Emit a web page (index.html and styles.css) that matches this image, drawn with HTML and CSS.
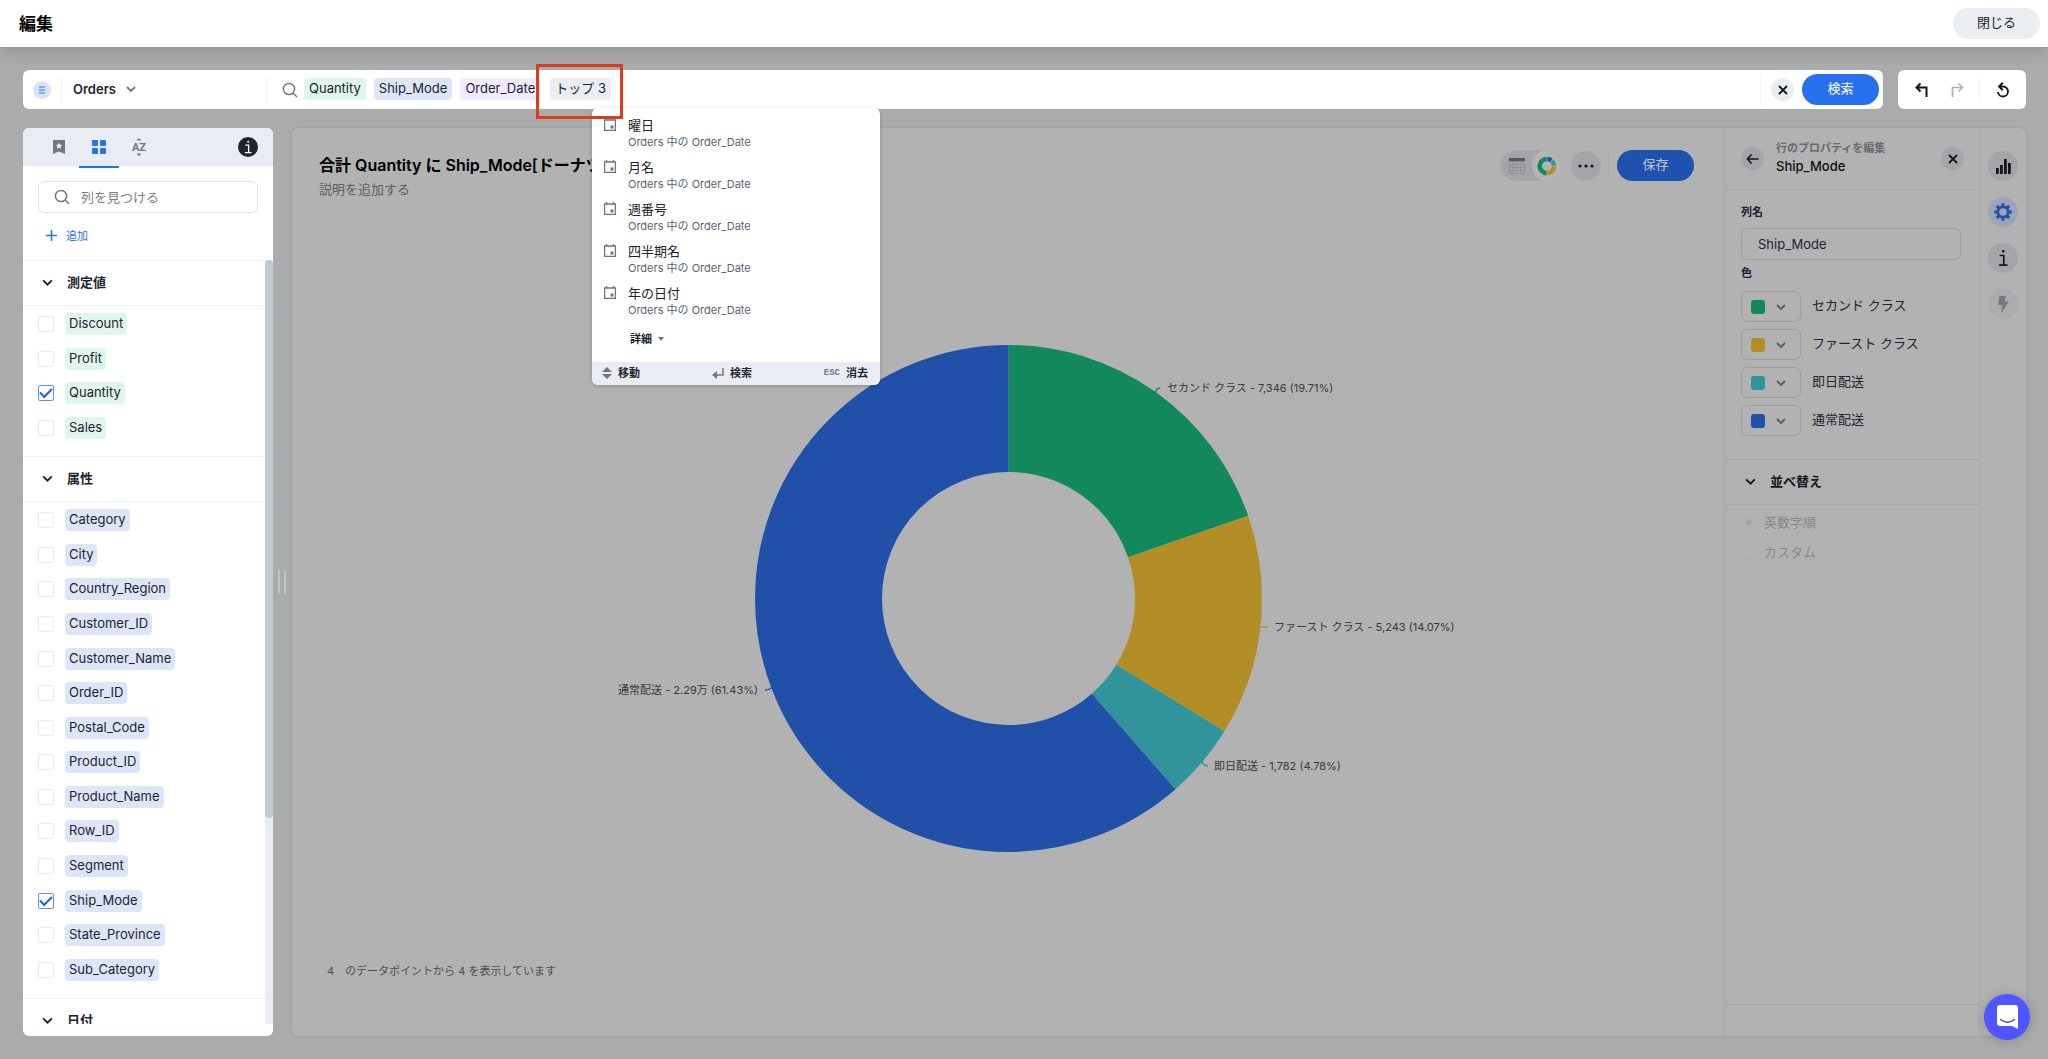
FILE: index.html
```html
<!DOCTYPE html>
<html lang="ja">
<head>
<meta charset="utf-8">
<title>編集</title>
<link rel="stylesheet" href="styles.css">
</head>
<body>
<svg class="defs" aria-hidden="true">
  <symbol id="chevron" viewBox="0 0 12 12"><path d="M2 4l4 4 4-4" fill="none" stroke="currentColor" stroke-width="1.8"/></symbol>
  <symbol id="search" viewBox="0 0 16 16"><circle cx="7" cy="7" r="5.6" fill="none" stroke="currentColor" stroke-width="1.5"/><path d="M11 11l4 4" stroke="currentColor" stroke-width="1.5"/></symbol>
  <symbol id="close" viewBox="0 0 12 12"><path d="M2 2l8 8M10 2l-8 8" stroke="currentColor" stroke-width="1.8"/></symbol>
  <symbol id="calendar" viewBox="0 0 14 14"><path d="M1.6 2h10.8v10.4H1.600zM3.500 0v2M10.500 0v2" fill="none" stroke="currentColor" stroke-width="1.300"/><path d="M7.500 7.500h3v3h-3z" fill="currentColor"/></symbol>
  <symbol id="info" viewBox="0 0 12 18"><path d="M2.500 6.500h4.300v9.500M2 16.200h8.500" fill="none" stroke="currentColor" stroke-width="1.700"/><circle cx="6.300" cy="2.200" r="1.300" fill="currentColor"/></symbol>
</svg>

<header class="topbar">
  <h1 class="topbar-title">編集</h1>
  <button class="pill pill-muted" type="button">閉じる</button>
</header>

<main class="workspace">
  <div class="search-row">
    <form class="search-bar">
      <button class="source-icon" type="button" aria-label="ソース"><svg width="10" height="10" viewBox="0 0 10 10"><path d="M2 2h6M2 5h6M2 8h6" stroke="currentColor" stroke-width="1.200"/></svg></button>
      <button class="source" type="button"><span>Orders</span><svg class="source-chevron" width="12" height="12"><use href="#chevron"/></svg></button>
      <svg class="search-icon" width="16" height="16"><use href="#search"/></svg>
      <div class="tokens">
        <span class="chip chip-green">Quantity</span>
        <span class="chip chip-blue">Ship_Mode</span>
        <span class="chip chip-violet">Order_Date</span>
        <span class="chip chip-gray marked">トップ 3<span class="marker"></span></span>
      </div>
      <input class="query" type="text" aria-label="検索">
      <div class="bar-actions">
        <button class="round round-small" type="button" aria-label="クリア"><svg width="12" height="12"><use href="#close"/></svg></button>
        <button class="pill pill-primary" type="submit">検索</button>
      </div>
      <div class="suggest">
        <ul class="suggest-list">
          <li class="suggest-item"><svg width="14" height="14"><use href="#calendar"/></svg><div><b>曜日</b><span>Orders 中の Order_Date</span></div></li>
          <li class="suggest-item"><svg width="14" height="14"><use href="#calendar"/></svg><div><b>月名</b><span>Orders 中の Order_Date</span></div></li>
          <li class="suggest-item"><svg width="14" height="14"><use href="#calendar"/></svg><div><b>週番号</b><span>Orders 中の Order_Date</span></div></li>
          <li class="suggest-item"><svg width="14" height="14"><use href="#calendar"/></svg><div><b>四半期名</b><span>Orders 中の Order_Date</span></div></li>
          <li class="suggest-item"><svg width="14" height="14"><use href="#calendar"/></svg><div><b>年の日付</b><span>Orders 中の Order_Date</span></div></li>
        </ul>
        <button class="suggest-more" type="button">詳細<svg width="6" height="4" viewBox="0 0 6 4"><path d="M0 0h6L3 4z" fill="#6f7680"/></svg></button>
        <div class="suggest-footer">
          <span><svg width="10" height="12" viewBox="0 0 10 12"><path d="M5 0l5 5H0zM0 7h10l-5 5z" fill="currentColor"/></svg>移動</span>
          <span><svg width="12" height="12" viewBox="0 0 12 12"><path d="M11 1v7H2.500" fill="none" stroke="currentColor" stroke-width="1.500"/><path d="M5 4v8L0 8z" fill="currentColor"/></svg>検索</span>
          <span><kbd>ESC</kbd>消去</span>
        </div>
      </div>
    </form>
    <div class="history">
      <button class="plain" type="button" aria-label="元に戻す"><svg width="16" height="16" viewBox="0 0 16 16"><path d="M6.500 1.500L2.500 5.500l4 4M2.500 5.500h10V15" fill="none" stroke="#14161c" stroke-width="2"/></svg></button>
      <button class="plain" type="button" aria-label="やり直し" disabled><svg width="16" height="16" viewBox="0 0 16 16"><path d="M9.500 1.500l4 4-4 4M13.500 5.500h-10V15" fill="none" stroke="#b0b2b5" stroke-width="1.700"/></svg></button>
      <button class="plain history-reset" type="button" aria-label="リセット"><svg width="16" height="16" viewBox="0 0 16 16"><path d="M4 4.500h4a5 5 0 1 1-5 5.500" fill="none" stroke="#14161c" stroke-width="1.900"/><path d="M7.800 .8L4 4.500l3.800 3.700" fill="none" stroke="#14161c" stroke-width="1.900"/></svg></button>
    </div>
  </div>

  <div class="panels">
    <aside class="sidebar">
      <div class="tabs">
        <button class="tab" type="button" aria-label="ブックマーク"><svg width="12" height="14" viewBox="0 0 12 14"><path d="M0 0h12v14l-6-2.500L0 14z" fill="#6f7680"/><path d="M6 2.500l1 2.300 2.500.2-1.900 1.600.6 2.400L6 7.700 3.800 9l.6-2.400L2.500 5 5 4.800z" fill="#e9edf3"/></svg></button>
        <button class="tab tab-active" type="button" aria-label="列"><svg width="14" height="14" viewBox="0 0 14 14" fill="#2770ef"><rect width="6" height="6" rx="1"/><rect x="8" width="6" height="6" rx="1"/><rect y="8" width="6" height="6" rx="1"/><rect x="8" y="8" width="6" height="6" rx="1"/></svg></button>
        <button class="tab" type="button" aria-label="並べ替え"><svg width="16" height="18" viewBox="0 0 16 18"><path d="M5.500 2.500L8 0l2.500 2.500zM5.500 15.500L8 18l2.500-2.500z" fill="#6f7680"/><text class="az" x="8" y="13" text-anchor="middle">AZ</text></svg></button>
        <button class="info-badge" type="button" aria-label="情報"><svg width="10" height="14" viewBox="0 0 12 18"><use href="#info"/></svg></button>
      </div>
      <label class="find"><svg width="16" height="16"><use href="#search"/></svg><input type="text" placeholder="列を見つける" aria-label="列を見つける"></label>
      <button class="add" type="button"><svg width="11" height="11" viewBox="0 0 11 11"><path d="M5.500 0v11M0 5.500h11" stroke="currentColor" stroke-width="1.500"/></svg>追加</button>
      <div class="columns">
        <div class="columns-scroll">
          <section>
            <button class="group" type="button"><svg width="13" height="13"><use href="#chevron"/></svg>測定値</button>
            <div class="list list-measures">
              <label><input type="checkbox"><span class="chip chip-green">Discount</span></label>
              <label><input type="checkbox"><span class="chip chip-green">Profit</span></label>
              <label><input type="checkbox" checked><span class="chip chip-green">Quantity</span></label>
              <label><input type="checkbox"><span class="chip chip-green">Sales</span></label>
            </div>
          </section>
          <section>
            <button class="group" type="button"><svg width="13" height="13"><use href="#chevron"/></svg>属性</button>
            <div class="list list-attributes">
              <label><input type="checkbox"><span class="chip chip-blue">Category</span></label>
              <label><input type="checkbox"><span class="chip chip-blue">City</span></label>
              <label><input type="checkbox"><span class="chip chip-blue">Country_Region</span></label>
              <label><input type="checkbox"><span class="chip chip-blue">Customer_ID</span></label>
              <label><input type="checkbox"><span class="chip chip-blue">Customer_Name</span></label>
              <label><input type="checkbox"><span class="chip chip-blue">Order_ID</span></label>
              <label><input type="checkbox"><span class="chip chip-blue">Postal_Code</span></label>
              <label><input type="checkbox"><span class="chip chip-blue">Product_ID</span></label>
              <label><input type="checkbox"><span class="chip chip-blue">Product_Name</span></label>
              <label><input type="checkbox"><span class="chip chip-blue">Row_ID</span></label>
              <label><input type="checkbox"><span class="chip chip-blue">Segment</span></label>
              <label><input type="checkbox" checked><span class="chip chip-blue">Ship_Mode</span></label>
              <label><input type="checkbox"><span class="chip chip-blue">State_Province</span></label>
              <label><input type="checkbox"><span class="chip chip-blue">Sub_Category</span></label>
            </div>
          </section>
          <section>
            <button class="group" type="button"><svg width="13" height="13"><use href="#chevron"/></svg>日付</button>
          </section>
        </div>
        <div class="track"><div class="thumb"></div></div>
      </div>
    </aside>

    <div class="resizer"><i></i><i></i></div>

    <div class="answer">
      <section class="chart-pane">
        <div class="chart-head">
          <div class="chart-titles">
            <h2>合計 Quantity に Ship_Mode[ドーナツ]</h2>
            <p>説明を追加する</p>
          </div>
          <div class="chart-tools">
            <div class="switch">
              <button type="button" aria-label="表"><svg width="16" height="16" viewBox="0 0 16 16"><path d="M.5 3.500h15v12H.5zM4.200 3.500v12M8 3.500v12M11.800 3.500v12M.5 6.500h15M.5 9.500h15M.5 12.500h15" fill="none" stroke="#8f9298"/><path d="M0 0h16v3H0z" fill="#55585e"/></svg></button>
              <button class="switch-on" type="button" aria-label="グラフ"><svg width="20" height="20" viewBox="0 0 20 20" fill="none" stroke-width="4.500"><path d="M9.700 17A7 7 0 0 1 9.700 3" stroke="#13885a"/><path d="M10.400 3A7 7 0 0 1 14.300 4.500" stroke="#2050a8"/><path d="M14.900 5A7 7 0 0 1 17 9.700" stroke="#31939b"/><path d="M17 10.400A7 7 0 0 1 10.400 17" stroke="#b38e27"/></svg></button>
            </div>
            <button class="round round-large" type="button" aria-label="その他"><svg width="16" height="4" viewBox="0 0 16 4" fill="#14161c"><circle cx="2" cy="2" r="1.600"/><circle cx="8" cy="2" r="1.600"/><circle cx="14" cy="2" r="1.600"/></svg></button>
            <div class="save"><button class="pill pill-save" type="button">保存</button></div>
          </div>
        </div>
        <svg class="donut" viewBox="0 0 1429 703" role="img" aria-label="ドーナツグラフ">
          <g fill="none" stroke-width="127">
            <circle cx="715.500" cy="351.500" r="190" stroke="#13885a" pathLength="100" stroke-dasharray="19.710 80.290" transform="rotate(-90 715.500 351.500)"/>
            <circle cx="715.500" cy="351.500" r="190" stroke="#b38e27" pathLength="100" stroke-dasharray="14.070 85.930" stroke-dashoffset="-19.710" transform="rotate(-90 715.500 351.500)"/>
            <circle cx="715.500" cy="351.500" r="190" stroke="#31939b" pathLength="100" stroke-dasharray="4.780 95.220" stroke-dashoffset="-33.780" transform="rotate(-90 715.500 351.500)"/>
            <circle cx="715.500" cy="351.500" r="190" stroke="#2050a8" pathLength="100" stroke-dasharray="61.440 38.560" stroke-dashoffset="-38.560" transform="rotate(-90 715.500 351.500)"/>
          </g>
          <g fill="none" stroke-width="1.500">
            <path d="M862 147q1-6 5-6" stroke="#13885a"/>
            <path d="M966 380h9" stroke="#b38e27"/>
            <path d="M908 513q2 6 7 6" stroke="#31939b"/>
            <path d="M472 443q4 0 8-3" stroke="#2050a8"/>
          </g>
          <g class="donut-labels">
            <text x="874" y="145">セカンド クラス - 7,346 (19.71%)</text>
            <text x="981" y="384">ファースト クラス - 5,243 (14.07%)</text>
            <text x="921" y="523">即日配送 - 1,782 (4.78%)</text>
            <text x="465" y="447" text-anchor="end">通常配送 - 2.29万 (61.43%)</text>
          </g>
        </svg>
        <p class="points"><span>4</span><span>のデータポイントから 4 を表示しています</span></p>
      </section>

      <section class="props">
        <header class="props-head">
          <button class="round round-small" type="button" aria-label="戻る"><svg width="13" height="12" viewBox="0 0 13 12"><path d="M5.500 1.500L1.500 6l4 4.500M1.500 6h11" fill="none" stroke="currentColor" stroke-width="1.700"/></svg></button>
          <div class="props-title"><small>行のプロパティを編集</small><h3>Ship_Mode</h3></div>
          <button class="round round-small" type="button" aria-label="閉じる"><svg width="12" height="12"><use href="#close"/></svg></button>
        </header>
        <div class="props-body">
          <label class="field-name" for="column-name">列名</label>
          <input class="field" id="column-name" type="text" value="Ship_Mode">
          <p class="field-name">色</p>
          <div class="colors">
            <div class="color"><button type="button" aria-label="セカンド クラスの色"><i class="swatch swatch-green"></i><svg width="12" height="12"><use href="#chevron"/></svg></button><span>セカンド クラス</span></div>
            <div class="color"><button type="button" aria-label="ファースト クラスの色"><i class="swatch swatch-yellow"></i><svg width="12" height="12"><use href="#chevron"/></svg></button><span>ファースト クラス</span></div>
            <div class="color"><button type="button" aria-label="即日配送の色"><i class="swatch swatch-teal"></i><svg width="12" height="12"><use href="#chevron"/></svg></button><span>即日配送</span></div>
            <div class="color"><button type="button" aria-label="通常配送の色"><i class="swatch swatch-blue"></i><svg width="12" height="12"><use href="#chevron"/></svg></button><span>通常配送</span></div>
          </div>
        </div>
        <button class="props-group" type="button"><svg width="13" height="13"><use href="#chevron"/></svg>並べ替え</button>
        <div class="sorts">
          <label><input type="radio" name="sort" checked disabled>英数字順</label>
          <label><input type="radio" name="sort" disabled>カスタム</label>
        </div>
        <footer class="props-foot"></footer>
      </section>

      <nav class="rail">
        <button class="round round-large" type="button" aria-label="グラフの種類"><svg width="15" height="15" viewBox="0 0 15 15" fill="#14161c"><path d="M0 9h2.800v6H0zM4 6h2.800v9H4zM8 0h2.800v15H8zM12 4h2.800v11H12z"/></svg></button>
        <button class="round round-large rail-on" type="button" aria-label="設定"><svg width="18" height="18" viewBox="0 0 18 18"><circle cx="9" cy="9" r="5.300" fill="none" stroke="#2050a8" stroke-width="3"/><circle cx="9" cy="9" r="7.600" fill="none" stroke="#2050a8" stroke-width="2.400" pathLength="16" stroke-dasharray="1 1" stroke-dashoffset=".5"/></svg></button>
        <button class="round round-large" type="button" aria-label="情報"><svg width="12" height="18"><use href="#info"/></svg></button>
        <button class="round round-large rail-off" type="button" aria-label="操作" disabled><svg width="12" height="17" viewBox="0 0 12 17"><path d="M2.500 0H9L7.500 5.500H12L4.200 17l.8-8H1z" fill="#77787c"/></svg></button>
      </nav>
    </div>
  </div>
</main>

<button class="chat" type="button" aria-label="チャット"><svg width="21" height="24" viewBox="0 0 21 24"><path d="M3 0h15a3 3 0 0 1 3 3v21l-6-3H3a3 3 0 0 1-3-3V3a3 3 0 0 1 3-3z" fill="#fff"/><path d="M3.500 14.500q7 5.500 14 0" fill="none" stroke="#3d43b8" stroke-width="1.400" stroke-linecap="round"/></svg></button>
</body>
</html>
```

FILE: styles.css
```css
* { box-sizing: border-box; }

body {
  margin: 0;
  height: 100vh;
  display: flex;
  flex-direction: column;
  overflow: hidden;
  background: #a9abad;
  color: #1d232f;
  font: 13px/20px Inter, "Noto Sans CJK JP", sans-serif;
}

button, input { font: inherit; color: inherit; margin: 0; }
button { border: 0; padding: 0; background: none; display: flex; align-items: center; justify-content: center; }
h1, h2, h3, p, ul { margin: 0; padding: 0; }
svg { flex: none; display: block; }
.defs { position: absolute; width: 0; height: 0; }

/* Top bar */
.topbar {
  flex: none;
  height: 47px;
  padding: 0 8px 0 19px;
  display: flex;
  align-items: center;
  justify-content: space-between;
  background: #fff;
  box-shadow: 0 4px 16px rgba(0, 0, 0, .16);
}
.topbar-title { font-size: 17px; line-height: 24px; color: #000; }

.pill { height: 31px; width: 77px; border-radius: 16px; padding-bottom: 4px; }
.pill-muted { width: 87px; background: #eaedf2; }
.pill-primary { background: #2770ef; color: #fff; }
.pill-save { background: #1f52ae; color: #bdc4d2; }

.round { flex: none; border-radius: 50%; background: #a3a5a9; color: #14161c; }
.round-small { width: 23px; height: 23px; }
.round-large { width: 30px; height: 30px; }

/* Search row */
.workspace {
  flex: 1;
  min-height: 0;
  padding: 23px 22px 23px 23px;
  display: flex;
  flex-direction: column;
  gap: 19px;
}
.search-row { display: flex; gap: 15px; height: 39px; flex: none; }
.search-bar {
  flex: 1;
  position: relative;
  display: flex;
  align-items: center;
  padding: 0 4px 0 10px;
  background: #fff;
  border-radius: 6px;
}
.source-icon { width: 18px; height: 18px; border-radius: 50%; background: #d5e3fb; color: #2770ef; }
.source {
  width: 206px;
  height: 26px;
  margin-left: 10px;
  padding: 0 0 2px 11px;
  gap: 9px;
  justify-content: flex-start;
  border: solid #eef0f3;
  border-width: 0 1px;
  font-weight: 600;
}
.source-chevron { color: #6f7680; }
.search-icon { margin: 0 6px 0 15px; color: #6f7680; }
.chip { height: 22px; padding: 0 4px; border-radius: 4px; line-height: 21px; white-space: nowrap; }
.tokens { display: flex; gap: 8px; padding-bottom: 1px; }
.tokens .chip { padding: 0 5px; line-height: 20px; }
.chip-green { background: #dff6ec; }
.chip-blue { background: #dde6f8; }
.chip-violet { background: #f1ebfd; }
.chip-gray { background: #eaedf2; }
.marked { position: relative; margin-left: 2px; }
.marker {
  position: absolute;
  inset: -14px -12px -19px -14px;
  border: 3px solid #de3a1c;
  z-index: 3;
}
.query { flex: 1; min-width: 0; height: 26px; border: 0; outline: 0; background: none; }
.bar-actions {
  height: 31px;
  padding-left: 10px;
  border-left: 1px solid #f5f6f8;
  display: flex;
  align-items: center;
  gap: 8px;
}
.bar-actions .round { background: #eaedf2; }

.history {
  width: 128px;
  padding-left: 6px;
  display: flex;
  align-items: center;
  background: #fff;
  border-radius: 6px;
}
.plain { width: 35px; height: 26px; }
.history-reset { flex: 1; margin-left: 5px; border-left: 1px solid #eef0f3; }

/* Suggestions */
.suggest {
  position: absolute;
  left: 569px;
  top: 38px;
  width: 288px;
  z-index: 2;
  background: #fff;
  border-radius: 6px;
  overflow: hidden;
  box-shadow: 0 1px 4px rgba(0, 0, 0, .2);
}
.suggest-list { list-style: none; padding-top: 8px; }
.suggest-item { height: 42px; padding: 0 11px; display: flex; gap: 11px; color: #6f7680; }
.suggest-item svg { margin-top: 2px; }
.suggest-item b, .suggest-item span { display: block; white-space: nowrap; }
.suggest-item b { font-weight: 400; line-height: 18px; color: #1d232f; }
.suggest-item span { font-size: 11px; line-height: 17px; color: #5b6370; }
.suggest-more { height: 36px; padding: 0 0 11px 38px; gap: 6px; font-size: 11px; font-weight: 700; line-height: 24px; }
.suggest-footer {
  height: 23px;
  padding: 0 12px 2px 10px;
  display: flex;
  align-items: center;
  justify-content: space-between;
  background: #e9edf3;
  font-size: 11px;
  font-weight: 700;
}
.suggest-footer span { display: flex; align-items: center; gap: 6px; }
.suggest-footer svg, .suggest-footer kbd { color: #6f7680; }
.suggest-footer kbd { font: 700 9px/20px "Liberation Mono", monospace; }

/* Sidebar */
.panels { flex: 1; min-height: 0; display: flex; }
.sidebar {
  width: 250px;
  flex: none;
  display: flex;
  flex-direction: column;
  padding-bottom: 12px;
  background: #fff;
  border-radius: 6px;
  overflow: hidden;
}
.tabs { height: 38px; flex: none; padding: 0 15px 0 16px; display: flex; align-items: center; background: #e9edf3; }
.tab { width: 40px; height: 40px; align-self: flex-start; border-bottom: 2px solid transparent; }
.tab-active { border-color: #2770ef; }
.az { font: 700 11px Roboto, sans-serif; fill: #6f7680; }
.info-badge { width: 20px; height: 20px; margin-left: auto; border-radius: 50%; background: #1d232f; color: #fff; }
.find {
  flex: none;
  height: 32px;
  margin: 15px 15px 0;
  padding-left: 15px;
  display: flex;
  align-items: center;
  gap: 11px;
  border: 1px solid #dfe2e6;
  border-radius: 6px;
  color: #6f7680;
}
.find input { flex: 1; min-width: 0; border: 0; outline: 0; padding: 0; background: none; }
.find input::placeholder { color: #777e8b; opacity: 1; }
.add { align-self: flex-start; flex: none; height: 47px; padding: 0 23px 2px; gap: 9px; font-size: 11px; color: #2770ef; }
.columns { flex: 1; min-height: 0; display: flex; }
.columns-scroll { flex: 1; overflow: hidden; }
.group {
  width: 100%;
  height: 46px;
  padding: 0 18px 2px;
  gap: 13px;
  justify-content: flex-start;
  border: solid #eff1f4;
  border-width: 1px 0;
  font-weight: 700;
}
.list { display: grid; grid-auto-rows: 1fr; margin: 1px 0 11px; }
.list-measures { height: 138px; }
.list-attributes { height: 484px; }
.list label { display: flex; align-items: center; gap: 11px; padding-left: 15px; }
.list input {
  appearance: none;
  width: 16px;
  height: 16px;
  border: 1px solid #e8eaed;
  border-radius: 2px;
}
.list input:checked { border-color: #5f93e8; display: grid; place-items: center; }
.list input:checked::before {
  content: "";
  width: 10px;
  height: 5px;
  margin-bottom: 3px;
  border: solid #2464c8;
  border-width: 0 0 2px 2px;
  transform: rotate(-45deg);
}
.track { width: 8px; background: #e9edf3; }
.thumb { height: 73%; background: #c2c9d6; border-radius: 4px; }

.resizer { width: 19px; display: flex; align-items: center; justify-content: center; gap: 4px; padding-right: 1px; }
.resizer i { width: 2px; height: 24px; background: #c2c3c5; }

/* Answer */
.answer { flex: 1; min-width: 0; display: flex; background: #b2b2b2; border-radius: 6px; box-shadow: 0 0 3px rgba(0, 0, 0, .14); }
.chart-pane { flex: 1; min-width: 0; display: flex; flex-direction: column; }
.chart-head { height: 119px; flex: none; padding: 22px 29px 0 27px; display: flex; justify-content: space-between; align-items: flex-start; }
.chart-titles h2 { font-size: 16px; line-height: 30px; font-weight: 600; color: #000; white-space: nowrap; }
.chart-titles p { color: #5b5e64; line-height: 19px; }
.chart-tools { display: flex; align-items: center; }
.chart-tools .round { margin: 0 7px 0 10px; }
.save { padding-left: 8px; border-left: 1px solid #a9aaac; }
.switch { width: 60px; height: 31px; padding-left: 8px; display: flex; align-items: center; justify-content: space-between; border-radius: 16px; background: #a3a5a9; }
.switch-on { width: 29px; height: 31px; border-radius: 50%; background: #b4b4b4; }
.donut { flex: 1; min-height: 0; width: 100%; }
.donut-labels { font-size: 11px; fill: #37393e; }
.points { height: 86px; flex: none; padding: 11px 35px; display: flex; gap: 11px; font-size: 11px; color: #4c4f55; }

.props { width: 257px; flex: none; display: flex; flex-direction: column; border: solid #a9aaac; border-width: 0 1px 0 3px; border-left: 3px double #a9aaac; }
.props-head { height: 62px; padding: 0 15px; display: flex; align-items: center; gap: 12px; border-bottom: 1px solid #a6a7a9; }
.props-title { flex: 1; padding-bottom: 4px; }
.props-title small { display: block; font-size: 11px; font-weight: 700; line-height: 18px; color: #666a71; }
.props-title h3 { font-size: 13px; line-height: 18px; font-weight: 500; color: #0c0e12; }
.props-body { padding: 11px 15px 23px; color: #1d232f; }
.field-name { display: block; font-size: 11px; font-weight: 700; line-height: 22px; }
.field { display: block; width: 220px; height: 32px; margin: 5px 0 2px; padding: 0 16px; background: none; border: 1px solid #9c9ea1; border-radius: 6px; }
.colors { display: grid; gap: 7px; margin-top: 7px; }
.color { display: flex; align-items: center; gap: 11px; height: 31px; }
.color span { padding-bottom: 3px; }
.color button { width: 60px; height: 31px; padding-right: 4px; gap: 10px; border: 1px solid #9c9ea1; border-radius: 6px; color: #55585e; }
.swatch { width: 14px; height: 14px; border-radius: 3px; }
.swatch-green { background: #13885a; }
.swatch-yellow { background: #b38e27; }
.swatch-teal { background: #31939b; }
.swatch-blue { background: #2050a8; }
.props-group { height: 46px; padding: 0 18px 2px; gap: 13px; justify-content: flex-start; border: solid #a6a7a9; border-width: 1px 0; font-weight: 700; color: #14161c; }
.sorts { padding: 2px 15px; color: #85878b; }
.sorts label { height: 30px; display: flex; align-items: center; gap: 8px; }
.sorts input { appearance: none; width: 15px; height: 15px; border: 1px solid #adaeaf; border-radius: 50%; }
.sorts input:checked { border: 5px solid #b0b0b1; background: #a0a1a3; }
.props-foot { height: 32px; margin-top: auto; border-top: 1px solid #a6a7a9; }

.rail { width: 46px; flex: none; padding-top: 23px; display: flex; flex-direction: column; align-items: center; gap: 16px; }
.rail-on { background: #9ca5b8; }
.rail-off { background: #acacae; }

.chat {
  position: fixed;
  right: 18px;
  bottom: 19px;
  width: 46px;
  height: 46px;
  border-radius: 50%;
  background: #4f55ff;
  box-shadow: 0 1px 12px rgba(0, 0, 0, .2);
}
```
